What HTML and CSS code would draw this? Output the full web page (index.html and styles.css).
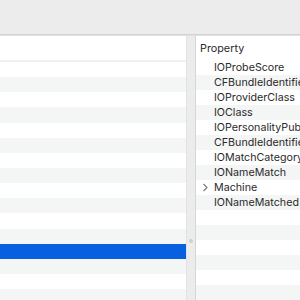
FILE: index.html
```html
<!DOCTYPE html>
<html>
<head>
<meta charset="utf-8">
<link rel="stylesheet" href="styles.css">
</head>
<body>
<div class="toolbar"></div>
<div class="main">
  <div class="left">
    <div class="left-head"></div>
    <div class="left-rows">
      <div class="row"></div>
      <div class="row alt"></div>
      <div class="row"></div>
      <div class="row alt"></div>
      <div class="row"></div>
      <div class="row alt"></div>
      <div class="row"></div>
      <div class="row alt"></div>
      <div class="row"></div>
      <div class="row alt"></div>
      <div class="row"></div>
      <div class="row alt"></div>
      <div class="row sel"></div>
      <div class="row alt"></div>
      <div class="row"></div>
      <div class="row alt"></div>
    </div>
  </div>
  <div class="splitter"><span class="handle"></span></div>
  <div class="right">
    <div class="right-head">Property</div>
    <div class="prow"><span class="key">IOProbeScore</span></div>
    <div class="prow alt"><span class="key">CFBundleIdentifier</span></div>
    <div class="prow"><span class="key">IOProviderClass</span></div>
    <div class="prow alt"><span class="key">IOClass</span></div>
    <div class="prow"><span class="key">IOPersonalityPublisher</span></div>
    <div class="prow alt"><span class="key">CFBundleIdentifierKernel</span></div>
    <div class="prow"><span class="key">IOMatchCategory</span></div>
    <div class="prow alt"><span class="key">IONameMatch</span></div>
    <div class="prow"><span class="chev"><svg width="7" height="9" viewBox="0 0 7 9"><path d="M1.5 1 L5 4.5 L1.5 8" fill="none" stroke="#777" stroke-width="1.1"/></svg></span><span class="key">Machine</span></div>
    <div class="prow alt"><span class="key">IONameMatched</span></div>
    <div class="prow"></div>
    <div class="prow alt"></div>
    <div class="prow"></div>
    <div class="prow alt"></div>
    <div class="prow"></div>
    <div class="prow alt"></div>
  </div>
</div>
</body>
</html>
```
FILE: styles.css
```css
html, body {
  margin: 0;
  padding: 0;
  width: 300px;
  height: 300px;
  overflow: hidden;
  background: #ececec;
  font-family: Inter, "Noto Sans", sans-serif;
}
.toolbar {
  height: 34px;
  background: #ececec;
  border-bottom: 1px solid #d3d3d3;
  box-shadow: 0 1px 1px rgba(0,0,0,0.05);
}
.main {
  display: flex;
  height: 265px;
  margin-top: 1px;
}
.left {
  width: 186px;
  background: #fff;
  border-right: 1px solid #e2e2e2;
  overflow: hidden;
}
.left-head {
  height: 24px;
  border-bottom: 2px solid #f0f0f0;
}
.row {
  height: 15.15px;
  background: #fff;
}
.row.alt {
  background: #f4f5f5;
}
.row.sel {
  background: #0660e0;
}
.splitter {
  width: 8px;
  background: #ececec;
  border-right: 1px solid #d6d6d6;
  position: relative;
}
.handle {
  position: absolute;
  left: 2px;
  top: 203px;
  width: 4px;
  height: 4px;
  border-radius: 50%;
  background: #cfcfcf;
}
.right {
  flex: 1;
  background: #fff;
  overflow: hidden;
  white-space: nowrap;
}
.right-head {
  height: 24px;
  line-height: 25px;
  padding-left: 4px;
  font-size: 10.8px;
  color: #2a2a2a;
}
.prow {
  height: 15px;
  line-height: 15px;
  font-size: 10.7px;
  color: #2a2a2a;
  display: flex;
  align-items: center;
  padding-left: 6px;
}
.prow.alt {
  background: #f4f5f5;
}
.chev {
  width: 12px;
  display: flex;
  align-items: center;
}
.key {
  margin-left: 12px;
}
.chev + .key {
  margin-left: 0;
}
```
